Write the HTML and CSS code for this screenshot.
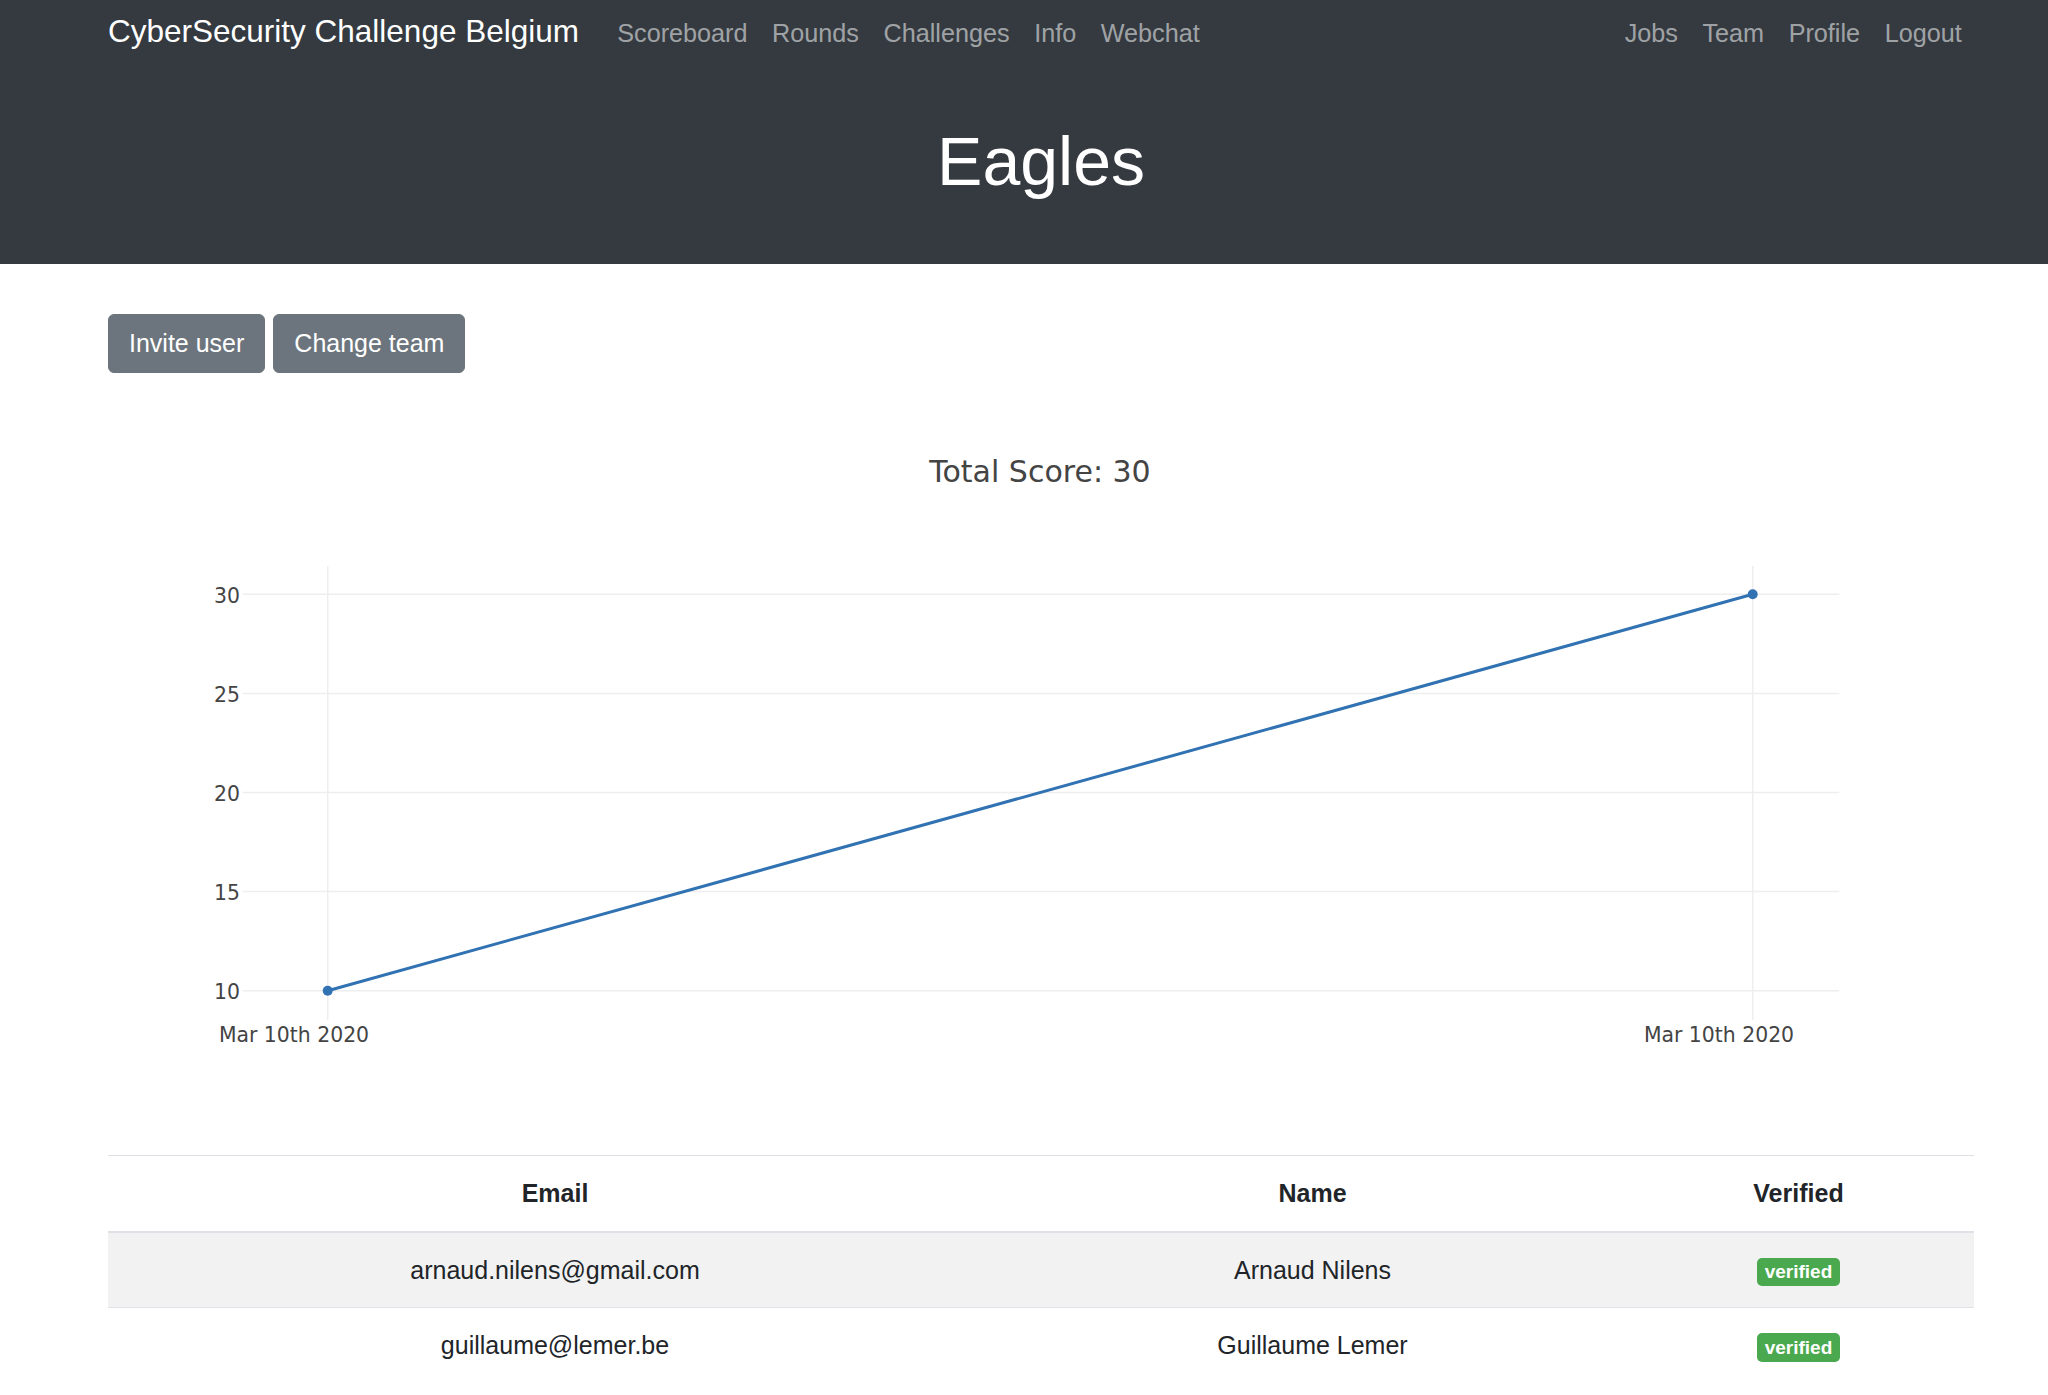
FILE: index.html
```html
<!DOCTYPE html>
<html lang="en">
<head>
<meta charset="utf-8">
<title>Eagles - CyberSecurity Challenge Belgium</title>
<link rel="stylesheet" href="styles.css">
</head>
<body>
<header class="hero">
  <nav class="navbar container">
    <a class="brand" href="#">CyberSecurity Challenge Belgium</a>
    <ul class="nav">
      <li><a class="nav-link" href="#">Scoreboard</a></li>
      <li><a class="nav-link" href="#">Rounds</a></li>
      <li><a class="nav-link" href="#">Challenges</a></li>
      <li><a class="nav-link" href="#">Info</a></li>
      <li><a class="nav-link" href="#">Webchat</a></li>
    </ul>
    <ul class="nav nav-right">
      <li><a class="nav-link" href="#">Jobs</a></li>
      <li><a class="nav-link" href="#">Team</a></li>
      <li><a class="nav-link" href="#">Profile</a></li>
      <li><a class="nav-link" href="#">Logout</a></li>
    </ul>
  </nav>
  <h1 class="hero-title container">Eagles</h1>
</header>
<main class="container">
  <div class="actions">
    <button class="btn">Invite user</button>
    <button class="btn">Change team</button>
  </div>
  <div class="chart">
    <svg class="chart-svg" width="1866" height="700" viewBox="0 0 1866 700">
      <text class="chart-title" x="932" y="82" text-anchor="middle">Total Score: 30</text>
      <g class="grid">
        <line x1="219.7" y1="166" x2="219.7" y2="620"/>
        <line x1="1644.7" y1="166" x2="1644.7" y2="620"/>
        <line x1="134.7" y1="194.3" x2="1731.3" y2="194.3"/>
        <line x1="134.7" y1="293.4" x2="1731.3" y2="293.4"/>
        <line x1="134.7" y1="392.5" x2="1731.3" y2="392.5"/>
        <line x1="134.7" y1="491.6" x2="1731.3" y2="491.6"/>
        <line x1="134.7" y1="590.7" x2="1731.3" y2="590.7"/>
      </g>
      <g class="ticks">
        <text x="132" y="202.7" text-anchor="end">30</text>
        <text x="132" y="301.8" text-anchor="end">25</text>
        <text x="132" y="400.9" text-anchor="end">20</text>
        <text x="132" y="500" text-anchor="end">15</text>
        <text x="132" y="599.1" text-anchor="end">10</text>
        <text x="186" y="641.7" text-anchor="middle">Mar 10th 2020</text>
        <text x="1611" y="641.7" text-anchor="middle">Mar 10th 2020</text>
      </g>
      <line class="trace" x1="219.7" y1="590.7" x2="1644.7" y2="194.3"/>
      <circle class="marker" cx="219.7" cy="590.7" r="5"/>
      <circle class="marker" cx="1644.7" cy="194.3" r="5"/>
    </svg>
  </div>
  <table class="members">
    <thead>
      <tr><th class="col-email">Email</th><th class="col-name">Name</th><th class="col-verified">Verified</th></tr>
    </thead>
    <tbody>
      <tr class="striped"><td>arnaud.nilens@gmail.com</td><td>Arnaud Nilens</td><td><span class="badge">verified</span></td></tr>
      <tr><td>guillaume@lemer.be</td><td>Guillaume Lemer</td><td><span class="badge">verified</span></td></tr>
    </tbody>
  </table>
</main>
</body>
</html>
```

FILE: styles.css
```css
* { box-sizing: border-box; }
html, body { margin: 0; padding: 0; }
body {
  font-family: "Liberation Sans", Arial, Helvetica, sans-serif;
  font-size: 25px;
  line-height: 1.5;
  color: #212529;
  background: #fff;
}
.container {
  margin-left: 108px;
  width: 1866px;
}
.hero {
  background: #343a40;
  height: 264px;
  overflow: hidden;
}
.navbar {
  display: flex;
  align-items: baseline;
  padding-top: 9px;
  height: 54px;
}
.brand {
  font-size: 31.5px;
  line-height: 45px;
  color: #fff;
  text-decoration: none;
  margin-right: 26px;
  white-space: nowrap;
}
.nav {
  display: flex;
  list-style: none;
  margin: 0;
  padding: 0;
}
.nav-right { margin-left: auto; }
.nav-link {
  display: block;
  padding: 0 12.3px;
  font-size: 25.2px;
  color: rgba(255, 255, 255, 0.55);
  text-decoration: none;
  line-height: 37px;
}
.hero-title {
  margin-top: 66px;
  margin-bottom: 0;
  font-size: 68px;
  line-height: 82px;
  font-weight: 400;
  color: #fff;
  text-align: center;
}
.actions {
  display: flex;
  gap: 8px;
  margin-top: 50px;
}
.btn {
  font-family: inherit;
  font-size: 25px;
  line-height: 37px;
  padding: 10px 20px;
  color: #fff;
  background: #6c757d;
  border: 1px solid #6c757d;
  border-radius: 6px;
}
.chart { margin-top: 27px; }
.chart-svg { display: block; }
.chart-title {
  font-family: "DejaVu Sans", Verdana, sans-serif;
  font-size: 30px;
  fill: #444;
}
.grid line { stroke: #eee; stroke-width: 1.5; }
.ticks text {
  font-family: "DejaVu Sans", Verdana, sans-serif;
  font-size: 20.4px;
  fill: #444;
}
.trace { stroke: #3172b3; stroke-width: 3; }
.marker { fill: #3172b3; }
.members {
  margin-top: 55px;
  border-collapse: collapse;
  width: 1866px;
  table-layout: fixed;
}
.col-email { width: 894px; }
.col-name { width: 621px; }
.col-verified { width: 351px; }
.members th, .members td {
  text-align: center;
  padding: 18px;
  line-height: 38.5px;
  border-top: 1px solid #dee2e6;
  vertical-align: middle;
}
.members thead th {
  font-weight: 700;
  border-bottom: 2px solid #dee2e6;
}
.members tr.striped td { background: #f2f2f2; }
.badge {
  display: inline-block;
  font-size: 19px;
  font-weight: 700;
  line-height: 1;
  padding: 4.75px 7.6px;
  color: #fff;
  background: #4aa84e;
  border-radius: 5px;
  vertical-align: middle;
}
```
